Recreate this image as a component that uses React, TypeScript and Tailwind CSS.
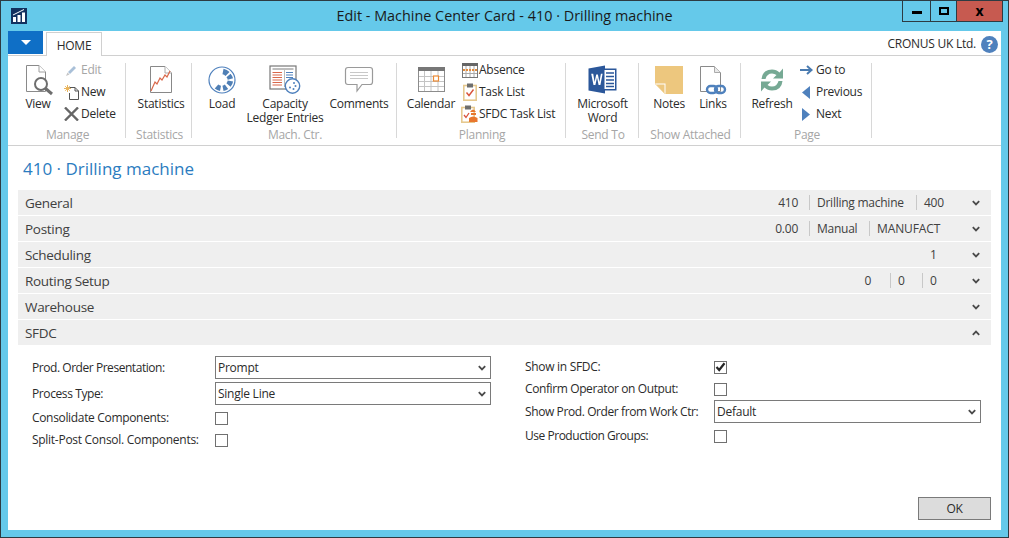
import React from "react";

const LogoIcon = () => (
  <svg width="16" height="16" viewBox="0 0 16 16"><rect width="16" height="16" fill="#12315f"/><rect x="2" y="9" width="3" height="5" fill="#fff"/><rect x="6.5" y="7" width="3" height="7" fill="#fff"/><rect x="11" y="4.5" width="3" height="9.5" fill="#fff"/><path d="M2 7 L8 4 L13 1.5" stroke="#fff" strokeWidth="1" fill="none"/></svg>
);
const ViewIcon = () => (
  <svg width="30" height="32" viewBox="0 0 30 32"><path d="M1.5 1.5H14L20.5 8V27.5H1.5Z" fill="#fff" stroke="#8a8a8a"/><path d="M14 1.5V8H20.5" fill="#fff" stroke="#a0a0a0"/><circle cx="16" cy="20" r="6" fill="#fff" stroke="#6e6e6e" strokeWidth="2"/><path d="M20.5 24.5L27 30" stroke="#6e6e6e" strokeWidth="3"/></svg>
);
const EditIcon = () => (
  <svg width="13" height="13" viewBox="0 0 13 13"><path d="M3 8L9 2L11 4L5 10Z" fill="#a9c0d8"/><path d="M2.5 8.5L4.5 10.5L1 12Z" fill="#c4c4c4"/></svg>
);
const NewIcon = () => (
  <svg width="16" height="16" viewBox="0 0 16 16"><path d="M5.5 3.5H11L14.5 7V15.5H5.5" fill="#fff" stroke="#555"/><path d="M5.5 9V15.5M11 3.5V7H14.5" fill="none" stroke="#555"/><g stroke="#eab55c" strokeWidth="1"><path d="M0 4.5H7M3.5 1V8M1.2 2.2L5.8 6.8M5.8 2.2L1.2 6.8"/></g></svg>
);
const DeleteIcon = () => (
  <svg width="15" height="14" viewBox="0 0 15 14"><path d="M1 0.5L14 13.5M14 0.5L1 13.5" stroke="#666" strokeWidth="2.4"/></svg>
);
const StatsIcon = () => (
  <svg width="24" height="30" viewBox="0 0 24 30"><path d="M1.5 1.5H16L22.5 8V27.5H1.5Z" fill="#fff" stroke="#888"/><path d="M16 1.5V8H22.5" fill="#fff" stroke="#aaa"/><path d="M2 26L6 17L8 19L11 13L13 15L16 10L18 12L21 6" fill="none" stroke="#d9684a" strokeWidth="1.2"/></svg>
);
const LoadIcon = () => (
  <svg width="28" height="28" viewBox="0 0 28 28"><circle cx="14" cy="14" r="13" fill="#fff" stroke="#4f81bd" strokeWidth="1.2"/><g fill="none" stroke="#4f7fb5" strokeWidth="5.5"><path d="M15 5.5A8.5 8.5 0 0 1 19.5 8" /><path d="M20.5 9.5A8.5 8.5 0 0 1 22.4 13"/><path d="M22.4 15A8.5 8.5 0 0 1 20.5 19"/><path d="M18.5 20.8A8.5 8.5 0 0 1 15 22.4"/><path d="M12.5 22.4A8.5 8.5 0 0 1 8.5 20.5"/></g></svg>
);
const CapacityIcon = () => (
  <svg width="32" height="30" viewBox="0 0 32 30"><rect x="1" y="1" width="26" height="23" fill="#fff" stroke="#777" strokeWidth="1.2"/><rect x="3.5" y="3" width="21" height="2" fill="#bdbdbd"/><g stroke="#d9674b"><path d="M3.5 7.5H13M3.5 10H13M3.5 12.5H13M3.5 15H13M3.5 17.5H13M3.5 20H13"/></g><path d="M15.5 5V22" stroke="#bbb"/><g stroke="#4f81bd"><path d="M17 7.5H24M17 10H24M17 12.5H24"/></g><circle cx="23.5" cy="21" r="7.2" fill="#fff" stroke="#4f81bd" strokeWidth="1.4"/><circle cx="25" cy="18" r="1" fill="#4f81bd"/><circle cx="26.5" cy="21" r="1" fill="#4f81bd"/><circle cx="24.5" cy="24" r="1" fill="#4f81bd"/><circle cx="21" cy="22.5" r="1" fill="#4f81bd"/></svg>
);
const CommentsIcon = () => (
  <svg width="30" height="28" viewBox="0 0 30 28"><path d="M4 1.5H26Q28.5 1.5 28.5 4V16Q28.5 18.5 26 18.5H18L13 25V18.5H4Q1.5 18.5 1.5 16V4Q1.5 1.5 4 1.5Z" fill="#fff" stroke="#9a9a9a" strokeWidth="1.2"/><path d="M6 6.5H24M6 9.5H24M6 12.5H24" stroke="#c8c8c8"/></svg>
);
const CalendarIcon = () => (
  <svg width="27" height="25" viewBox="0 0 27 25"><rect x="0.5" y="0.5" width="26" height="24" fill="#fff" stroke="#8c8c8c"/><rect x="0" y="0" width="27" height="4" fill="#777"/><g stroke="#c4c4c4"><path d="M6.5 4V24M13 4V24M20 4V24M1 9.5H26M1 14.5H26M1 19.5H26"/></g><rect x="15.5" y="9" width="5" height="5" fill="#fff" stroke="#ec8a35" strokeWidth="1.2"/></svg>
);
const AbsenceIcon = () => (
  <svg width="16" height="15" viewBox="0 0 16 15"><rect x="0.5" y="0.5" width="15" height="14" fill="#fff" stroke="#777"/><rect width="16" height="3" fill="#666"/><g stroke="#aaa"><path d="M4 3V14M8 3V14M12 3V14M1 10.5H15"/></g><path d="M1 7H15" stroke="#e38a3a" strokeWidth="2" strokeDasharray="2 1"/></svg>
);
const TaskIcon = () => (
  <svg width="14" height="18" viewBox="0 0 14 18"><rect x="0.8" y="2.5" width="12.4" height="14.7" fill="#fff" stroke="#e6c98f" strokeWidth="1.6"/><rect x="4" y="0.5" width="6" height="4" fill="#6e6e6e"/><path d="M3.5 9.5L6 12.5L10.5 6.5" fill="none" stroke="#d9533b" strokeWidth="1.4"/></svg>
);
const SfdcIcon = () => (
  <svg width="17" height="18" viewBox="0 0 17 18"><rect x="0.8" y="2.5" width="12.4" height="14.7" fill="#fff" stroke="#e6c98f" strokeWidth="1.6"/><rect x="4" y="0.5" width="6" height="4" fill="#6e6e6e"/><path d="M3 10L5 12.5L8 8" fill="none" stroke="#d9533b" strokeWidth="1.3"/><path d="M9 7Q12 2 15 7Z" fill="#e8772e"/><rect x="10" y="8" width="5" height="2" fill="#e8772e"/><path d="M8 17V13Q12 10 16.5 13V17Z" fill="#e8772e"/></svg>
);
const WordIcon = () => (
  <svg width="29" height="29" viewBox="0 0 29 29"><path d="M0.5 3.5L17 0.5V28.5L0.5 25.5Z" fill="#2b579a"/><rect x="15" y="3.5" width="13.5" height="22" fill="#2b579a"/><rect x="16.5" y="5" width="10.5" height="19" fill="#fff"/><g stroke="#2b579a" strokeWidth="1.4"><path d="M18 8H26M18 11.5H26M18 15H26M18 18.5H26M18 21.5H26"/></g><path d="M3.2 8.8H5.2L6.6 17L8.2 9.5H9.9L11.4 17L12.9 8.8H14.6L12.4 20H10.6L9 12.5L7.4 20H5.5Z" fill="#fff"/></svg>
);
const NotesIcon = () => (
  <svg width="28" height="28" viewBox="0 0 28 28"><path d="M0 0H28V28H10L0 18Z" fill="#edc77e"/><path d="M0 17.5H10.5V28" fill="#fff" stroke="none"/><path d="M1 18.5H9.5V27.5Z" fill="#edc77e"/></svg>
);
const LinksIcon = () => (
  <svg width="28" height="30" viewBox="0 0 28 30"><path d="M1.5 1.5H15.5L21.5 7.5V26.5H1.5Z" fill="#fff" stroke="#8a8a8a"/><path d="M15.5 1.5V7.5H21.5" fill="#e8e8e8" stroke="#aaa"/><g fill="none" stroke="#4f81bd" strokeWidth="2.4"><rect x="8" y="21" width="10" height="7" rx="3.5" fill="#fff"/><rect x="16" y="21" width="10" height="7" rx="3.5"/></g></svg>
);
const RefreshIcon = () => (
  <svg width="28" height="28" viewBox="0 0 28 28"><path d="M3.5 13Q4.5 3.5 14 3.5Q18.5 3.5 21.5 6.5L25 2.5V12.5H15L18.5 9Q16.5 7.5 14 7.5Q9 7.5 7.5 13Z" fill="#76a994"/><path d="M24.5 15Q23.5 24.5 14 24.5Q9.5 24.5 6.5 21.5L3 25.5V15.5H13L9.5 19Q11.5 20.5 14 20.5Q19 20.5 20.5 15Z" fill="#76a994"/></svg>
);
const GotoIcon = () => (
  <svg width="16" height="10" viewBox="0 0 16 10"><path d="M0 5H10.5M7 1L11.5 5L7 9" fill="none" stroke="#4a7bb0" strokeWidth="2"/></svg>
);
const PrevIcon = () => (
  <svg width="12" height="13" viewBox="0 0 12 13"><path d="M8 0V13L0 6.5Z" fill="#4f81bd"/></svg>
);
const NextIcon = () => (
  <svg width="12" height="13" viewBox="0 0 12 13"><path d="M0 0V13L8 6.5Z" fill="#4f81bd"/></svg>
);
const Chevron = ({ up = false }: { up?: boolean }) => (
  <svg width="8" height="6" viewBox="0 0 8 6"><path d={up ? "M0.8 4.8L4 1.6L7.2 4.8" : "M0.8 1.2L4 4.4L7.2 1.2"} fill="none" stroke="#4a4a4a" strokeWidth="1.8"/></svg>
);

const Large = ({ icon, label, w, ml = "", ip = "" }: { icon: React.ReactNode; label: React.ReactNode; w: string; ml?: string; ip?: string }) => (
  <div className={`${w} ${ml} flex flex-col items-center shrink-0`}>
    <div className={`h-[35px] flex items-center justify-center ${ip}`}>{icon}</div>
    <div className="text-center leading-[14px] whitespace-nowrap">{label}</div>
  </div>
);

const Small = ({ icon, label, grey = false, pad = "w-[19px]" }: { icon: React.ReactNode; label: string; grey?: boolean; pad?: string }) => (
  <div className={`h-[22px] flex items-center whitespace-nowrap ${grey ? "text-[#a6a6a6]" : ""}`}>
    <div className={`${pad} flex items-center justify-center shrink-0`}>{icon}</div>
    <span>{label}</span>
  </div>
);

const Group = ({ w, caption, children }: { w: string; caption: string; children: React.ReactNode }) => (
  <div className={`${w} h-[75px] flex flex-col shrink-0 border-r border-[#d8d8d8]`}>
    <div className="h-[66px] shrink-0 flex items-start -mt-[1px]">{children}</div>
    <div className="shrink-0 pl-[2px] text-center text-[#a6a6a6] leading-[13px] whitespace-nowrap">{caption}</div>
  </div>
);

type Cell = { t: string; c: string };
const FastTab = ({ title, cells = [], up = false }: { title: string; cells?: Cell[]; up?: boolean }) => (
  <div className="h-[25px] mb-[1px] bg-[#efefef] flex items-center pl-[7px] pr-[10px]">
    <span className="flex-1 pt-[1px] text-[13.5px] tracking-[-0.3px] text-[#404040]">{title}</span>
    <div className="flex items-center h-[15px] text-[#404040]">
      {cells.map((cell, i) => (
        <span key={i} className={`${cell.c} whitespace-nowrap leading-[15px]`}>{cell.t}</span>
      ))}
    </div>
    <div className="w-[39px] flex justify-end pr-[1px]"><Chevron up={up} /></div>
  </div>
);

const Label = ({ children, w, t = "" }: { children: string; w: string; t?: string }) => (
  <div className={`${w} ${t} shrink-0 whitespace-nowrap`}>{children}</div>
);
const Combo = ({ value, w }: { value: string; w: string }) => (
  <div className={`${w} h-[23px] border border-[#7a7a7a] flex items-center justify-between pl-[2px] pr-[4px]`}>
    <span>{value}</span>
    <Chevron />
  </div>
);
const Check = ({ on = false }: { on?: boolean }) => (
  <div className="w-[13px] h-[13px] border border-[#707070] flex items-center justify-center">
    {on && <svg width="11" height="10" viewBox="0 0 11 10"><path d="M1.5 5L4.2 8L9.5 1.2" fill="none" stroke="#262626" strokeWidth="2.2"/></svg>}
  </div>
);

export default function App() {
  const sep = "border-l border-[#c8c8c8]";
  return (
    <div
      className="w-[1009px] h-[538px] bg-[#65c9ea] border border-[#2d3b42] flex flex-col relative overflow-hidden text-[12px] text-[#2b2b2b]"
      style={{ fontFamily: '"Open Sans", "Noto Sans", sans-serif', letterSpacing: "-0.25px" }}
    >
      <div className="h-[30px] flex items-center shrink-0 pl-[10px] pb-[1px] relative">
        <LogoIcon />
        <div className="flex-1 text-center text-[14.4px] text-[#1a1a1a] pr-[26px] tracking-normal">Edit - Machine Center Card - 410 · Drilling machine</div>
      </div>
      <div className="absolute top-0 right-[5px] h-[21px] flex border border-t-0 border-[#2d3b42]">
        <div className="w-[28px] border-r border-[#2d3b42] flex items-center justify-center"><div className="w-[10px] h-[3px] bg-black mt-[3px]" /></div>
        <div className="w-[26px] border-r border-[#2d3b42] flex items-center justify-center"><div className="w-[10px] h-[8px] border-2 border-black" /></div>
        <div className="w-[45px] bg-[#c75a50] flex items-center justify-center text-[14px] font-bold text-black leading-none">x</div>
      </div>

      <div className="mx-[7px] mb-[7px] flex-1 bg-white flex flex-col min-h-0">
        <div className="h-[24px] flex items-end shrink-0 relative">
          <div className="w-[35px] h-[23px] bg-[#0f6fc6] flex items-center justify-center mb-[1px]">
            <div className="w-0 h-0 border-l-[5px] border-r-[5px] border-t-[5px] border-l-transparent border-r-transparent border-t-white" />
          </div>
          <div className="ml-[3px] w-[56px] h-[24px] pt-[2px] border border-b-0 border-[#d0d0d0] bg-white flex items-center justify-center text-[#2b2b2b] relative z-10 -mb-[1px]">HOME</div>
          <div className="flex-1 flex items-center justify-end h-full pr-[3px] pt-[2px]">
            <span className="mr-[5px]">CRONUS UK Ltd.</span>
            <div className="w-[17px] h-[17px] rounded-full bg-[#4f81bd] text-white text-[13px] font-bold flex items-center justify-center leading-none">?</div>
          </div>
        </div>

        <div className="h-[91px] shrink-0 border-y border-[#d0d0d0] flex pt-[7px]">
          <Group w="w-[118px]" caption="Manage">
            <div className="w-[8px]" />
            <Large w="w-[44px]" ip="pl-[4px]" icon={<ViewIcon />} label="View" />
            <div className="-mt-[3px] ml-[2px] flex flex-col">
              <Small grey icon={<EditIcon />} label="Edit" />
              <Small icon={<NewIcon />} label="New" />
              <Small icon={<DeleteIcon />} label="Delete" />
            </div>
          </Group>
          <Group w="w-[66px]" caption="Statistics">
            <Large w="w-[66px]" ml="ml-[2px]" icon={<StatsIcon />} label="Statistics" />
          </Group>
          <Group w="w-[205px]" caption="Mach. Ctr.">
            <Large w="w-[60px]" icon={<LoadIcon />} label="Load" />
            <Large w="w-[66px]" icon={<CapacityIcon />} label={<>Capacity<br />Ledger Entries</>} />
            <Large w="w-[78px]" ml="ml-[2px]" icon={<CommentsIcon />} label="Comments" />
          </Group>
          <Group w="w-[169px]" caption="Planning">
            <Large w="w-[68px]" icon={<CalendarIcon />} label="Calendar" />
            <div className="-mt-[3px] flex flex-col -ml-[5px]">
              <Small icon={<AbsenceIcon />} label="Absence" />
              <Small icon={<TaskIcon />} label="Task List" />
              <Small icon={<SfdcIcon />} label="SFDC Task List" />
            </div>
          </Group>
          <Group w="w-[73px]" caption="Send To">
            <Large w="w-[73px]" icon={<WordIcon />} label={<>Microsoft<br />Word</>} />
          </Group>
          <Group w="w-[102px]" caption="Show Attached">
            <Large w="w-[58px]" ml="ml-[1px]" icon={<NotesIcon />} label="Notes" />
            <Large w="w-[30px]" icon={<LinksIcon />} label="Links" />
          </Group>
          <Group w="w-[131px]" caption="Page">
            <Large w="w-[62px]" icon={<RefreshIcon />} label="Refresh" />
            <div className="-mt-[3px] flex flex-col -ml-[3px]">
              <Small pad="w-[16px]" icon={<GotoIcon />} label="Go to" />
              <Small pad="w-[16px]" icon={<PrevIcon />} label="Previous" />
              <Small pad="w-[16px]" icon={<NextIcon />} label="Next" />
            </div>
          </Group>
        </div>

        <div className="flex-1 flex flex-col px-[10px] min-h-0">
          <div className="h-[44px] flex items-center pl-[5px] pt-[1px] text-[17px] text-[#2b7cc0] shrink-0 tracking-normal">410 · Drilling machine</div>
          <FastTab title="General" cells={[
            { t: "410", c: "pr-[11px]" },
            { t: "Drilling machine", c: `${sep} pl-[7px] w-[107px]` },
            { t: "400", c: `${sep} pl-[7px] w-[26px]` },
          ]} />
          <FastTab title="Posting" cells={[
            { t: "0.00", c: "pr-[11px]" },
            { t: "Manual", c: `${sep} pl-[7px] w-[60px]` },
            { t: "MANUFACT", c: `${sep} pl-[7px] w-[73px] tracking-[-0.1px]` },
          ]} />
          <FastTab title="Scheduling" cells={[{ t: "1", c: "w-[12px]" }]} />
          <FastTab title="Routing Setup" cells={[
            { t: "0", c: "pr-[19px]" },
            { t: "0", c: `${sep} pl-[7px] w-[32px]` },
            { t: "0", c: `${sep} pl-[7px] w-[20px]` },
          ]} />
          <FastTab title="Warehouse" />
          <FastTab title="SFDC" up />

          <div className="flex pt-[10px] pl-[14px]">
            <div className="w-[493px] flex flex-col shrink-0">
              <div className="flex items-center h-[23px] mb-[3px]"><Label w="w-[183px]" t="tracking-[-0.45px]">Prod. Order Presentation:</Label><Combo w="w-[276px]" value="Prompt" /></div>
              <div className="flex items-center h-[23px] mb-[2px]"><Label w="w-[183px]" t="tracking-[-0.4px]">Process Type:</Label><Combo w="w-[276px]" value="Single Line" /></div>
              <div className="flex items-center h-[22px]"><Label w="w-[183px]" t="tracking-[-0.33px]">Consolidate Components:</Label><Check /></div>
              <div className="flex items-center h-[22px]"><Label w="w-[183px]" t="tracking-[-0.28px]">Split-Post Consol. Components:</Label><Check /></div>
            </div>
            <div className="flex flex-col flex-1">
              <div className="flex items-center h-[22px]"><Label w="w-[189px]" t="tracking-[-0.3px]">Show in SFDC:</Label><Check on /></div>
              <div className="flex items-center h-[22px]"><Label w="w-[189px]" t="tracking-[-0.39px]">Confirm Operator on Output:</Label><Check /></div>
              <div className="flex items-center h-[23px] mb-[2px]"><Label w="w-[189px]" t="tracking-[-0.4px]">Show Prod. Order from Work Ctr:</Label><Combo w="w-[267px]" value="Default" /></div>
              <div className="flex items-center h-[22px]"><Label w="w-[189px]" t="tracking-[-0.47px]">Use Production Groups:</Label><Check /></div>
            </div>
          </div>

          <div className="flex-1 flex items-end justify-end pb-[10px]">
            <div className="w-[73px] h-[23px] bg-[#dcdcdc] border border-[#7a7a7a] flex items-center justify-center">OK</div>
          </div>
        </div>
      </div>
    </div>
  );
}
